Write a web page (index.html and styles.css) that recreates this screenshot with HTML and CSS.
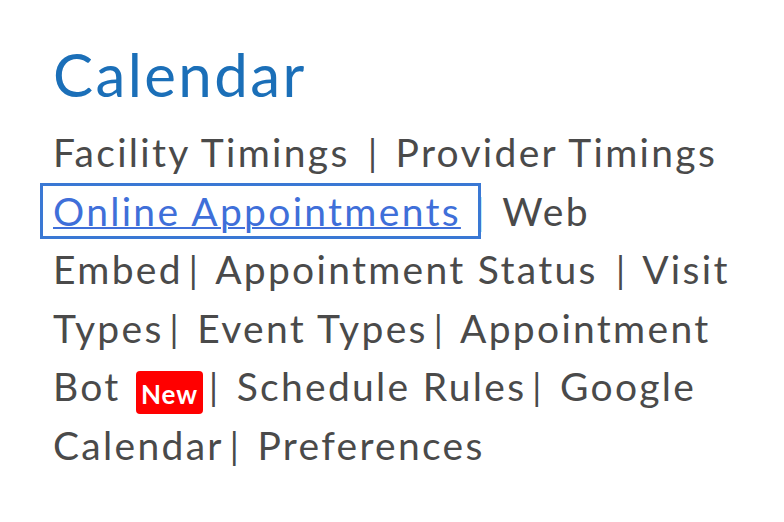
FILE: index.html
```html
<!DOCTYPE html>
<html lang="en">
<head>
  <meta charset="UTF-8">
  <title>Calendar</title>
  <link rel="stylesheet" href="styles.css">
</head>
<body>
  <div class="page">
    <h1 class="title">Calendar</h1>
    <nav class="links">
      <a href="#">Facility Timings</a> <span class="sep">|</span> <a href="#">Provider Timings</a>
      <a href="#" class="current">Online Appointments</a> <span class="sep sep-ring">|</span> <a href="#">Web Embed</a><span class="sep">|</span> <a href="#">Appointment Status</a> <span class="sep">|</span> <a href="#">Visit Types</a><span class="sep">|</span> <a href="#">Event Types</a><span class="sep">|</span> <a href="#">Appointment Bot</a> <span class="badge">New</span><span class="sep">|</span> <a href="#">Schedule Rules</a><span class="sep">|</span> <a href="#">Google Calendar</a><span class="sep">|</span> <a href="#">Preferences</a>
    </nav>
  </div>
</body>
</html>
```

FILE: styles.css
```css
body {
  margin: 0;
  background: #fff;
  font-family: Lato, "Open Sans", sans-serif;
}

.page {
  padding: 38px 0 0 53px;
  width: 690px;
}

.title {
  margin: 0 0 13px;
  font-size: 60px;
  font-weight: 400;
  line-height: 1.2;
  letter-spacing: 2.4px;
  color: #1b6fb8;
}

.links {
  font-size: 39px;
  line-height: 1.5;
  letter-spacing: 2.3px;
  color: #4a4a4a;
}

.links a {
  color: #4a4a4a;
  text-decoration: none;
}

/* focused link: ring sits over the trailing separator */
.links a.current {
  position: relative;
  color: #3f6fd9;
  text-decoration: underline;
  text-decoration-thickness: 2px;
}

.links a.current::after {
  content: "";
  position: absolute;
  top: -5px;
  bottom: -5px;
  left: -13px;
  right: -20px;
  border: 3px solid #3a78d4;
}

.sep {
  margin: 0 4px 0 6px;
  font-size: 36px;
  color: #4a4a4a;
}

.sep-ring {
  margin-left: 2px;
  color: #3a78d4;
}

.badge {
  display: inline-block;
  margin-left: 3px;
  padding: 4px 5px 0 5px;
  border-radius: 4px;
  background: #ff0000;
  color: #fff;
  font-size: 26px;
  font-weight: 700;
  letter-spacing: 1px;
  line-height: 39px;
  vertical-align: -3px;
}
```
